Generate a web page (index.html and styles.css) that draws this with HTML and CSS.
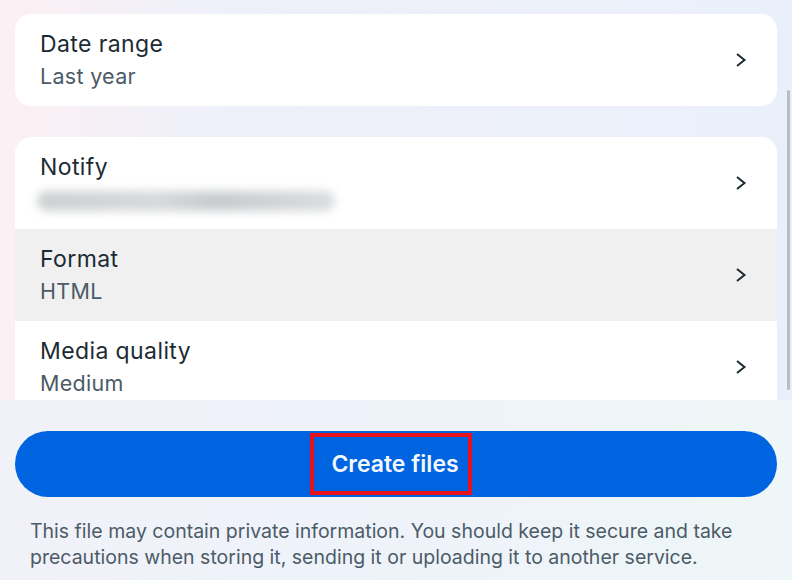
FILE: index.html
```
<!DOCTYPE html>
<html>

<head>
    <title>Export settings</title>
    <link rel="stylesheet" href="styles.css">
</head>

<body>
    <div class="scroll_area">
        <div class="card">
            <div class="row">
                <div class="row_text">
                    <div class="row_title">Date range</div>
                    <div class="row_value">Last year</div>
                </div>
                <svg class="chevron" width="12" height="16" viewBox="0 0 12 16"><polyline points="2,2 9.5,8 2,14" /></svg>
            </div>
        </div>

        <div class="card">
            <div class="row">
                <div class="row_text">
                    <div class="row_title">Notify</div>
                    <div class="blurred"></div>
                </div>
                <svg class="chevron" width="12" height="16" viewBox="0 0 12 16"><polyline points="2,2 9.5,8 2,14" /></svg>
            </div>
            <div class="row row_active">
                <div class="row_text">
                    <div class="row_title">Format</div>
                    <div class="row_value">HTML</div>
                </div>
                <svg class="chevron" width="12" height="16" viewBox="0 0 12 16"><polyline points="2,2 9.5,8 2,14" /></svg>
            </div>
            <div class="row">
                <div class="row_text">
                    <div class="row_title">Media quality</div>
                    <div class="row_value">Medium</div>
                </div>
                <svg class="chevron" width="12" height="16" viewBox="0 0 12 16"><polyline points="2,2 9.5,8 2,14" /></svg>
            </div>
        </div>
        <div class="scrollbar"></div>
    </div>

    <div class="footer">
        <button class="create_btn"><span class="highlight">Create files</span></button>
        <p class="notice">This file may contain private information. You should keep it secure and take precautions when storing it, sending it or uploading it to another service.</p>
    </div>
</body>

</html>
```

FILE: styles.css
```
body {
    margin: 0;
    width: 792px;
    height: 580px;
    overflow: hidden;
    font-family: Inter, "Noto Sans", sans-serif;
    color: #1c2b33;
    background: linear-gradient(90deg, #fcf0f3 0%, #eff0f9 25%, #eaf0fa 100%);
}

.scroll_area {
    position: relative;
    height: 400px;
    overflow: hidden;
    padding: 14px 15px 0;
    box-sizing: border-box;
}

.card {
    background: white;
    border-radius: 16px;
    overflow: hidden;
    margin-bottom: 31px;
}

.row {
    display: flex;
    align-items: center;
    justify-content: space-between;
    height: 92px;
    padding: 0 30px 0 25px;
    box-sizing: border-box;
}

.row_active {
    background: #f0f0f0;
}

.row_title {
    font-size: 23px;
    letter-spacing: 0.4px;
    line-height: 32px;
}

.row_value {
    font-size: 21.5px;
    letter-spacing: 0.3px;
    line-height: 32px;
    color: #4b5b67;
}

.blurred {
    width: 298px;
    height: 20px;
    margin: 8px 0 4px -3px;
    border-radius: 10px;
    background: linear-gradient(90deg, #cdd0d2 0%, #d6d8da 40%, #c8cbce 60%, #dadcde 100%);
    filter: blur(5px);
}

.chevron polyline {
    fill: none;
    stroke: #1c2b33;
    stroke-width: 2;
}

.scrollbar {
    position: absolute;
    right: 2px;
    top: 90px;
    width: 3px;
    height: 300px;
    border-radius: 2px;
    background: #b9bdc4;
}

.footer {
    height: 180px;
    padding: 31px 15px 0;
    box-sizing: border-box;
    background: linear-gradient(90deg, #f1f1f9 0%, #eef3fa 50%, #eef6f7 100%);
}

.create_btn {
    display: flex;
    align-items: center;
    justify-content: center;
    width: 100%;
    height: 66px;
    border: none;
    border-radius: 33px;
    background: #0064e0;
    padding: 0;
    font-family: Inter, "Noto Sans", sans-serif;
}

.highlight {
    display: inline-block;
    color: #f4f8ff;
    font-size: 23px;
    font-weight: 600;
    line-height: 54px;
    padding: 0 9px 0 17px;
    border: 4px solid #e8101c;
    margin-left: -10px;
}

.notice {
    margin: 21px 15px 0;
    font-size: 19.5px;
    line-height: 26px;
    color: #4b5b67;
}
```
